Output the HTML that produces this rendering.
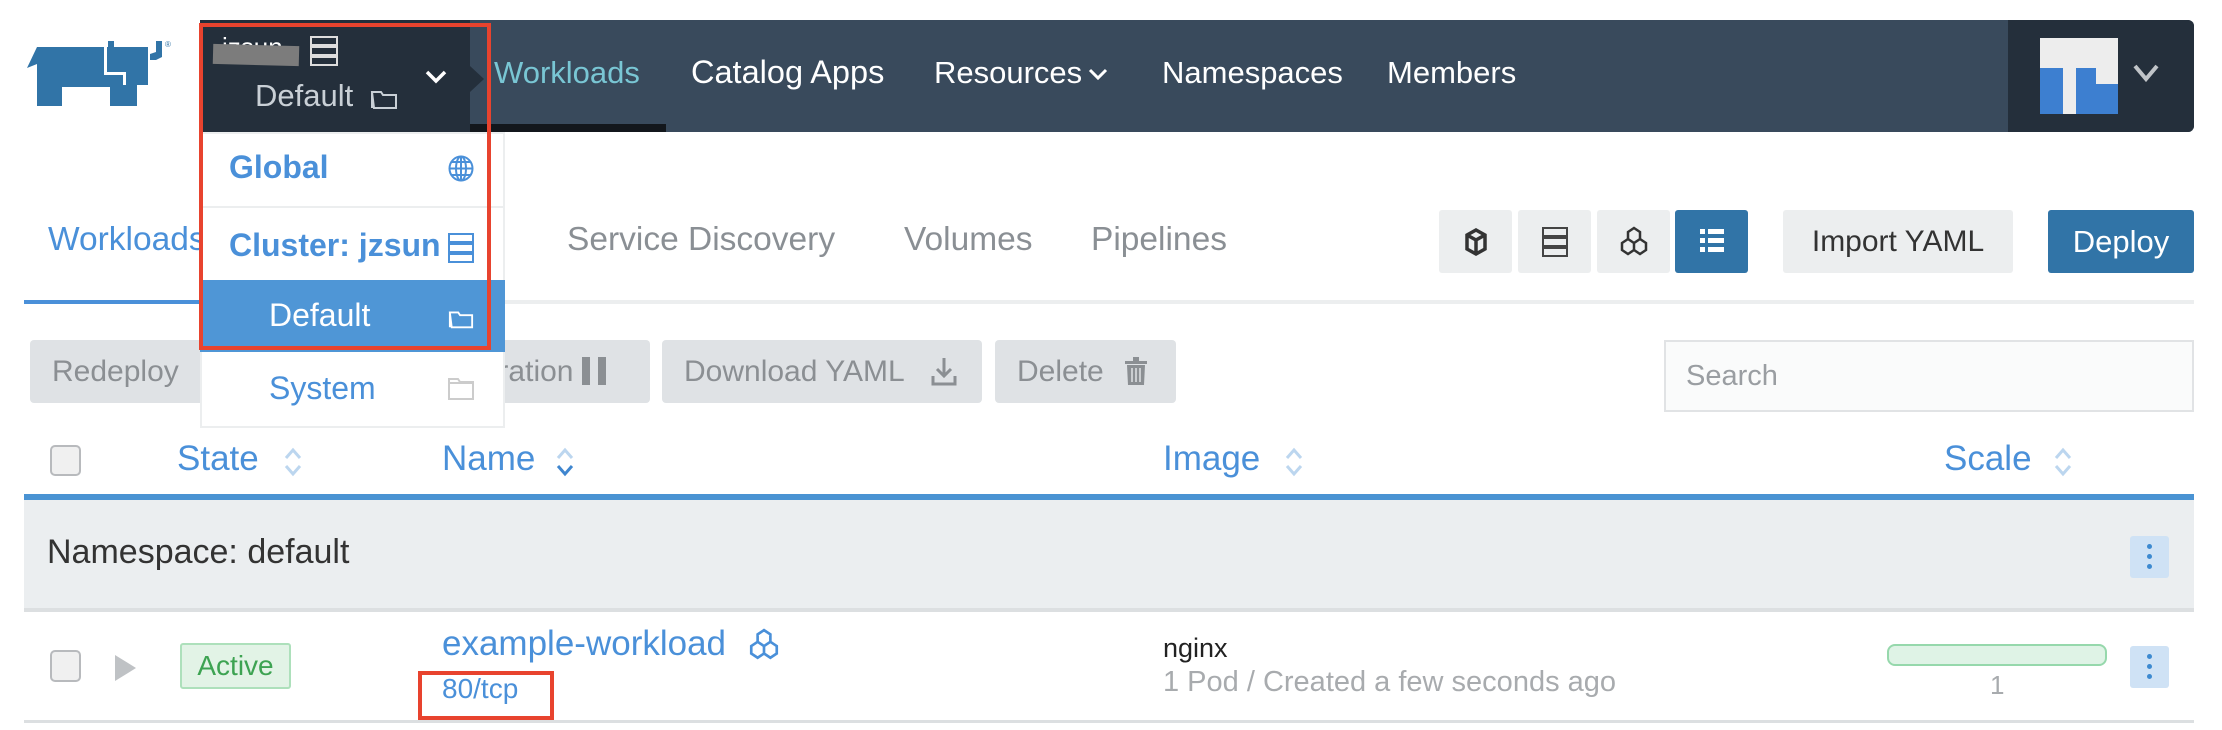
<!DOCTYPE html>
<html><head><meta charset="utf-8"><style>
*{margin:0;padding:0;box-sizing:border-box}
body{width:2222px;height:730px;background:#fff;position:relative;overflow:hidden;font-family:"Liberation Sans",sans-serif}
.a{position:absolute;white-space:nowrap}
.nav{color:#fff;font-size:31px;top:55px}
.tab{font-size:33.5px;color:#8a8f94;top:221px}
.btn{position:absolute;background:#dfe2e5;border-radius:4px;color:#8b8f93;font-size:30px;line-height:63px;padding-left:22px;top:340px;height:63px;white-space:nowrap;overflow:hidden}
.hd{font-size:35px;color:#4a90d9;top:439px}
.ib{position:absolute;top:210px;height:63px;width:73px;background:#eceeef;border-radius:3px}
.keb{position:absolute;left:2130px;width:39px;background:#cfe2f5;border-radius:3px}
.keb i{position:absolute;left:17px;width:5px;height:5px;border-radius:50%;background:#3d8ad0}
</style></head><body>
<!-- logo -->
<svg class="a" style="left:0;top:0" width="180" height="115" viewBox="0 0 180 115">
<path fill="#3174a7" d="M37 47 L27 68 L37 64 L37 106 L62 106 L62 87 L110 87 L110 106 L137 106 L137 85 L148 85 L148 47 Z"/>
<path fill="#fff" d="M104 47 H107 V72 H126 V85 H123 V75 H104Z"/>
<path fill="#3174a7" d="M108 49 V41 H114 V49Z M150 60 L150 54 L156 52 L156 41 L162 41 L162 57 L156 60Z"/>
<text x="165" y="47" font-size="8" fill="#3174a7" font-family="Liberation Sans">®</text>
</svg>
<!-- navbar -->
<div class="a" style="left:200px;top:20px;width:1994px;height:112px;background:#394a5c;border-radius:0 6px 6px 0"></div>
<div class="a" style="left:200px;top:20px;width:270px;height:112px;background:#242f3b"></div>
<div class="a" style="left:470px;top:66px;width:0;height:0;border-top:13px solid transparent;border-bottom:13px solid transparent;border-left:14px solid #242f3b"></div>
<div class="a" style="left:470px;top:124px;width:196px;height:8px;background:#13171c"></div>
<div class="a" style="left:2008px;top:20px;width:186px;height:112px;background:#242f3b;border-radius:0 6px 6px 0"></div>
<div class="a" style="left:222px;top:32px;font-size:26px;color:#fff">jzsun</div>
<div class="a" style="left:213px;top:45px;width:86px;height:20px;background:#7c7c7c;transform:rotate(1.5deg)"></div>
<svg class="a" style="left:310px;top:36px" width="28" height="30" viewBox="0 0 28 30" fill="none" stroke="#ddd" stroke-width="2"><rect x="1" y="1" width="26" height="8"/><rect x="1" y="11" width="26" height="8"/><rect x="1" y="21" width="26" height="8"/></svg>
<div class="a" style="left:255px;top:78px;font-size:31px;color:#c9d0d6">Default</div>
<svg class="a" style="left:370px;top:87px" width="28" height="22" viewBox="0 0 28 22" fill="none" stroke="#c9d0d6" stroke-width="2"><path d="M2 5h9l2 3h13v13H4z M2 5v16"/></svg>
<svg class="a" style="left:425px;top:70px" width="22" height="14" viewBox="0 0 22 14" fill="none" stroke="#fff" stroke-width="3.5"><path d="M2 2l9 9 9-9"/></svg>
<div class="a nav" style="left:494px;color:#79c6d4">Workloads</div>
<div class="a nav" style="left:691px;font-size:32.5px;top:54px">Catalog Apps</div>
<div class="a nav" style="left:934px">Resources</div>
<svg class="a" style="left:1088px;top:68px" width="20" height="12" viewBox="0 0 20 12" fill="none" stroke="#fff" stroke-width="3"><path d="M2 2l8 8 8-8"/></svg>
<div class="a nav" style="left:1162px">Namespaces</div>
<div class="a nav" style="left:1387px">Members</div>
<svg class="a" style="left:2040px;top:38px" width="78" height="76" viewBox="0 0 78 76"><rect width="78" height="76" fill="#ededed"/><rect x="0" y="46" width="78" height="30" fill="#3d7fd0"/><rect x="0" y="30" width="10" height="16" fill="#3d7fd0"/><rect x="23" y="30" width="13" height="46" fill="#ededed"/><rect x="36" y="30" width="20" height="46" fill="#3d7fd0"/><rect x="56" y="46" width="22" height="30" fill="#3d7fd0"/><rect x="10" y="30" width="13" height="16" fill="#3d7fd0"/></svg>
<svg class="a" style="left:2133px;top:64px" width="26" height="18" viewBox="0 0 26 18" fill="none" stroke="#c0c4c8" stroke-width="4"><path d="M2 2l11 13L24 2"/></svg>
<!-- tabs -->
<div class="a tab" style="left:48px;color:#4a90d9">Workloads</div>
<div class="a tab" style="left:275px">Load Balancing</div>
<div class="a tab" style="left:567px">Service Discovery</div>
<div class="a tab" style="left:904px">Volumes</div>
<div class="a tab" style="left:1091px">Pipelines</div>
<div class="a" style="left:24px;top:300px;width:2170px;height:4px;background:#eceeef"></div>
<div class="a" style="left:24px;top:300px;width:180px;height:4px;background:#4a90d9"></div>
<div class="ib" style="left:1439px"></div>
<svg class="a" style="left:1464px;top:228px" width="24" height="28" viewBox="0 0 24 28" fill="none" stroke="#333" stroke-width="3.5"><path d="M12 2l9 5v14l-9 5-9-5V7z M3 7l9 5 9-5 M12 12v14"/></svg>
<div class="ib" style="left:1518px"></div>
<svg class="a" style="left:1542px;top:227px" width="26" height="30" viewBox="0 0 26 30" fill="none" stroke="#444" stroke-width="2"><rect x="1" y="1" width="24" height="8"/><rect x="1" y="11" width="24" height="8"/><rect x="1" y="21" width="24" height="8"/></svg>
<div class="ib" style="left:1597px"></div>
<svg class="a" style="left:1619px;top:226px" width="30" height="32" viewBox="0 0 30 32" fill="none" stroke="#333" stroke-width="2.5"><path d="M15 2l6 4v7l-6 4-6-4V6z M9 13l-6 4v7l6 4 6-4v-7 M21 13l6 4v7l-6 4-6-4"/></svg>
<div class="ib" style="left:1675px;background:#3174a7"></div>
<svg class="a" style="left:1700px;top:228px" width="24" height="26" viewBox="0 0 24 26" fill="#fff"><rect x="0" y="1" width="5" height="5"/><rect x="8" y="1" width="16" height="5"/><rect x="0" y="10" width="5" height="5"/><rect x="8" y="10" width="16" height="5"/><rect x="0" y="19" width="5" height="5"/><rect x="8" y="19" width="16" height="5"/></svg>
<div class="a" style="left:1783px;top:210px;width:230px;height:63px;background:#eceeef;border-radius:3px;color:#333;font-size:30px;line-height:63px;text-align:center">Import YAML</div>
<div class="a" style="left:2048px;top:210px;width:146px;height:63px;background:#3174a7;border-radius:3px;color:#fff;font-size:31px;line-height:63px;text-align:center">Deploy</div>
<!-- action bar -->
<div class="btn" style="left:30px;width:190px">Redeploy</div>
<div class="btn" style="left:300px;width:350px;padding-left:0">Pause Orchestration <span style="display:inline-block;width:8px;height:28px;background:#8b8f93;vertical-align:-4px"></span> <span style="display:inline-block;width:8px;height:28px;background:#8b8f93;vertical-align:-4px"></span></div>
<div class="btn" style="left:662px;width:320px">Download YAML</div>
<svg class="a" style="left:930px;top:356px" width="28" height="30" viewBox="0 0 28 30" fill="none" stroke="#8b8f93" stroke-width="3"><path d="M14 2v18 M7 13l7 7 7-7 M3 20v8h22v-8"/></svg>
<div class="btn" style="left:995px;width:181px">Delete</div>
<svg class="a" style="left:1125px;top:356px" width="22" height="30" viewBox="0 0 22 30" fill="#8b8f93"><rect x="0" y="5" width="22" height="3"/><rect x="8" y="1" width="6" height="4"/><path d="M2 9h18l-1 20H3z" /><path d="M7 12v14M11 12v14M15 12v14" stroke="#dfe2e5" stroke-width="1.5"/></svg>
<div class="a" style="left:1664px;top:340px;width:530px;height:72px;background:#fafbfb;border:2px solid #e1e3e5;font-size:29px;color:#9a9ea2;line-height:68px;padding-left:20px">Search</div>
<!-- table header -->
<div class="a" style="left:50px;top:445px;width:31px;height:31px;border:2px solid #b8babd;border-radius:5px;background:#f0f0f0"></div>
<div class="a hd" style="left:177px">State</div>
<div class="a hd" style="left:442px">Name</div>
<div class="a hd" style="left:1163px">Image</div>
<div class="a hd" style="left:1944px">Scale</div>
<svg class="a" style="left:283px;top:446px" width="20" height="32" viewBox="0 0 20 32" fill="none" stroke="#bcd6ef" stroke-width="3"><path d="M3 12l7-8 7 8 M3 20l7 8 7-8"/></svg>
<svg class="a" style="left:555px;top:446px" width="20" height="32" viewBox="0 0 20 32" fill="none" stroke-width="3"><path d="M3 12l7-8 7 8" stroke="#bcd6ef"/><path d="M3 20l7 8 7-8" stroke="#3f86cf"/></svg>
<svg class="a" style="left:1284px;top:446px" width="20" height="32" viewBox="0 0 20 32" fill="none" stroke="#bcd6ef" stroke-width="3"><path d="M3 12l7-8 7 8 M3 20l7 8 7-8"/></svg>
<svg class="a" style="left:2053px;top:446px" width="20" height="32" viewBox="0 0 20 32" fill="none" stroke="#bcd6ef" stroke-width="3"><path d="M3 12l7-8 7 8 M3 20l7 8 7-8"/></svg>
<div class="a" style="left:24px;top:494px;width:2170px;height:6px;background:#4a93d3"></div>
<div class="a" style="left:24px;top:500px;width:2170px;height:108px;background:#ebeef0"></div>
<div class="a" style="left:24px;top:608px;width:2170px;height:4px;background:#dcdfe1"></div>
<div class="a" style="left:47px;top:533px;font-size:34px;color:#333">Namespace: default</div>
<div class="keb" style="top:536px;height:42px"><i style="top:8px"></i><i style="top:18px"></i><i style="top:28px"></i></div>
<!-- row -->
<div class="a" style="left:50px;top:650px;width:31px;height:32px;border:2px solid #b8babd;border-radius:5px;background:#f0f0f0"></div>
<div class="a" style="left:115px;top:655px;width:0;height:0;border-top:13px solid transparent;border-bottom:13px solid transparent;border-left:21px solid #bfc2c5"></div>
<div class="a" style="left:180px;top:643px;width:111px;height:46px;background:#e2f3e6;border:2px solid #ade0bb;border-radius:3px;color:#3da352;font-size:28px;line-height:42px;text-align:center">Active</div>
<div class="a" style="left:442px;top:624px;font-size:35px;color:#4a90d9">example-workload</div>
<svg class="a" style="left:748px;top:628px" width="32" height="34" viewBox="0 0 30 32" fill="none" stroke="#4a90d9" stroke-width="2.5"><path d="M15 2l6 4v7l-6 4-6-4V6z M9 13l-6 4v7l6 4 6-4v-7 M21 13l6 4v7l-6 4-6-4"/></svg>
<div class="a" style="left:442px;top:673px;font-size:28px;color:#4a90d9">80/tcp</div>
<div class="a" style="left:418px;top:671px;width:136px;height:49px;border:4px solid #e8432e"></div>
<div class="a" style="left:1163px;top:633px;font-size:27px;color:#222">nginx</div>
<div class="a" style="left:1163px;top:666px;font-size:29px;color:#a8abae">1 Pod / Created a few seconds ago</div>
<div class="a" style="left:1887px;top:644px;width:220px;height:22px;background:#dff3e6;border:2px solid #96d8ac;border-radius:8px"></div>
<div class="a" style="left:1990px;top:670px;font-size:26px;color:#a8abae">1</div>
<div class="keb" style="top:646px;height:42px"><i style="top:8px"></i><i style="top:18px"></i><i style="top:28px"></i></div>
<div class="a" style="left:24px;top:720px;width:2170px;height:3px;background:#dcdfe1"></div>
<!-- dropdown -->
<div class="a" style="left:200px;top:132px;width:305px;height:296px;background:#fff;border:2px solid #eceeef"></div>
<div class="a" style="left:202px;top:206px;width:301px;height:2px;background:#eceeef"></div>
<div class="a" style="left:229px;top:149px;font-size:32px;font-weight:bold;color:#4a90d9">Global</div>
<svg class="a" style="left:448px;top:155px" width="26" height="27" viewBox="0 0 26 27" fill="none" stroke="#4a90d9" stroke-width="2"><ellipse cx="13" cy="13.5" rx="11.5" ry="12"/><ellipse cx="13" cy="13.5" rx="5" ry="12"/><path d="M1.5 13.5h23 M3 7h20 M3 20h20 M13 1.5v24"/></svg>
<div class="a" style="left:229px;top:227px;font-size:32px;font-weight:bold;color:#4a90d9">Cluster: jzsun</div>
<svg class="a" style="left:448px;top:233px" width="26" height="30" viewBox="0 0 26 30" fill="none" stroke="#4a90d9" stroke-width="2"><rect x="1" y="1" width="24" height="8"/><rect x="1" y="11" width="24" height="8"/><rect x="1" y="21" width="24" height="8"/></svg>
<div class="a" style="left:200px;top:280px;width:305px;height:72px;background:#4f96d6"></div>
<div class="a" style="left:269px;top:297px;font-size:32px;color:#fff">Default</div>
<svg class="a" style="left:448px;top:307px" width="26" height="22" viewBox="0 0 28 22" fill="none" stroke="#fff" stroke-width="2"><path d="M2 5h9l2 3h13v13H4z M2 5v16"/></svg>
<div class="a" style="left:269px;top:370px;font-size:32px;color:#4a90d9">System</div>
<svg class="a" style="left:448px;top:378px" width="26" height="22" viewBox="0 0 26 22" fill="none" stroke="#ccc" stroke-width="2"><path d="M1 1h9l2 3h13v17H1z M1 5h24"/></svg>
<div class="a" style="left:199px;top:23px;width:292px;height:327px;border:4px solid #e8432e"></div>
</body></html>
